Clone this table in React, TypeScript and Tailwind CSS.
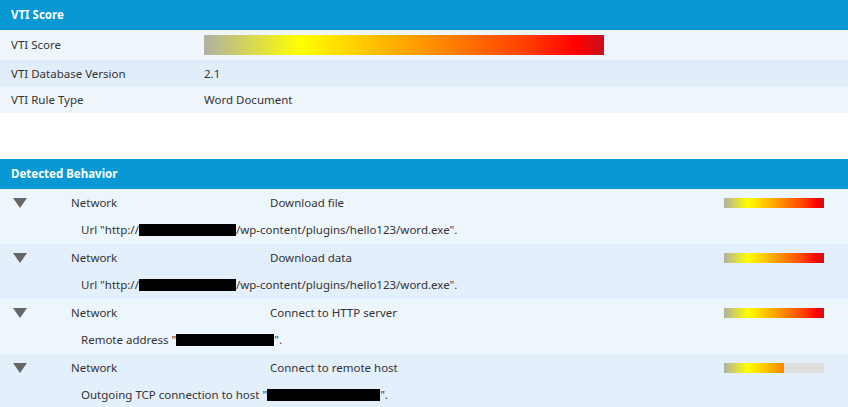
import React from "react";

const GRAD =
  "linear-gradient(to right, #b0b0a4 0%, #ffff00 24%, #ffc800 40%, #ff9600 55%, #ff4000 80%, #ff0000 93%, #c8101e 100%)";

function Bar({ pct, w, h }: { pct: number; w: number; h: number }) {
  return (
    <div className="relative overflow-hidden bg-[#e0e0e0]" style={{ width: w, height: h }}>
      <div className="h-full overflow-hidden" style={{ width: (w * pct) / 100 }}>
        <div style={{ width: w, height: h, background: GRAD }} />
      </div>
    </div>
  );
}

function Redact({ w }: { w: number }) {
  return <span className="inline-block h-[12px] bg-black align-[-2px]" style={{ width: w }} />;
}

function Header({ title }: { title: string }) {
  return (
    <div className="flex h-[30px] items-center bg-[#0899d4] pl-[11px] text-[11.5px] font-bold text-white">
      {title}
    </div>
  );
}

function Triangle() {
  return (
    <svg width="14" height="10" viewBox="0 0 14 10" className="block">
      <polygon points="0,0 14,0 7,10" fill="#666666" />
    </svg>
  );
}

const behaviors: { cat: string; name: string; detail: React.ReactNode; pct: number; bg: string }[] = [
  {
    cat: "Network",
    name: "Download file",
    detail: (
      <>
        Url "http://<Redact w={97} />/wp-content/plugins/hello123/word.exe".
      </>
    ),
    pct: 100,
    bg: "bg-[#eef6fd]",
  },
  {
    cat: "Network",
    name: "Download data",
    detail: (
      <>
        Url "http://<Redact w={97} />/wp-content/plugins/hello123/word.exe".
      </>
    ),
    pct: 100,
    bg: "bg-[#e3effb]",
  },
  {
    cat: "Network",
    name: "Connect to HTTP server",
    detail: (
      <>
        Remote address "<Redact w={98} />".
      </>
    ),
    pct: 100,
    bg: "bg-[#eef6fd]",
  },
  {
    cat: "Network",
    name: "Connect to remote host",
    detail: (
      <>
        Outgoing TCP connection to host "<Redact w={113} />".
      </>
    ),
    pct: 60,
    bg: "bg-[#e3effb]",
  },
];

export default function App() {
  return (
    <div
      className="h-[407px] w-[848px] overflow-hidden bg-white text-[11.5px] text-[#333333]"
      style={{ fontFamily: '"Segoe UI", "Noto Sans", "Open Sans", sans-serif' }}
    >
      <Header title="VTI Score" />
      <div className="flex h-[30px] items-center bg-[#eef6fc]">
        <div className="w-[204px] pl-[11px]">VTI Score</div>
        <Bar pct={100} w={400} h={20} />
      </div>
      <div className="flex h-[27px] items-center bg-[#e1eef9]">
        <div className="w-[204px] pl-[11px]">VTI Database Version</div>
        <div>2.1</div>
      </div>
      <div className="flex h-[26px] items-center bg-[#eef6fc]">
        <div className="w-[204px] pl-[11px]">VTI Rule Type</div>
        <div>Word Document</div>
      </div>
      <div className="h-[46px]" />
      <Header title="Detected Behavior" />
      {behaviors.map((b, i) => (
        <div key={i} className={`flex h-[55px] flex-col ${b.bg}`}>
          <div className="flex h-[28px] items-center">
            <div className="w-[71px] pl-[13px]">
              <Triangle />
            </div>
            <div className="w-[199px]">{b.cat}</div>
            <div className="flex-1">{b.name}</div>
            <div className="w-[124px]">
              <Bar pct={b.pct} w={100} h={10} />
            </div>
          </div>
          <div className="flex h-[26px] items-center pl-[81px]">
            <div>{b.detail}</div>
          </div>
        </div>
      ))}
    </div>
  );
}
